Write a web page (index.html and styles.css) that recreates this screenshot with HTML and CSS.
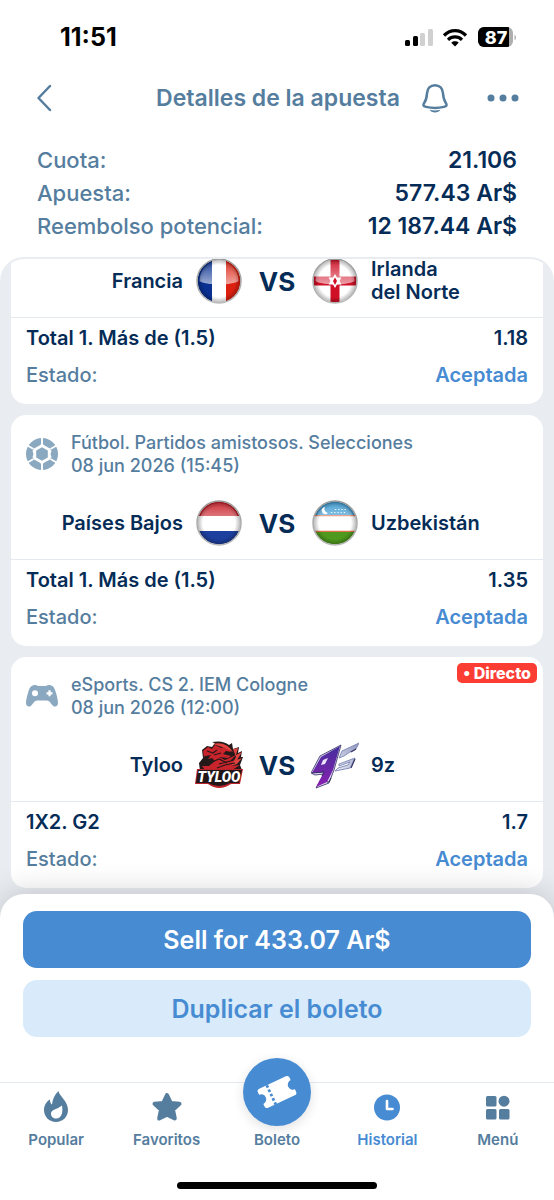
FILE: index.html
```html
<!DOCTYPE html>
<html lang="es">
<head>
<meta charset="utf-8">
<meta name="viewport" content="width=device-width, initial-scale=1">
<title>Detalles de la apuesta</title>
<link rel="stylesheet" href="styles.css">
</head>
<body>
<svg class="defs" width="0" height="0" aria-hidden="true">
  <defs>
    <clipPath id="disc"><circle cx="24" cy="24" r="21.5"/></clipPath>
    <linearGradient id="gloss" x1="0" y1="0" x2="0" y2="1">
      <stop offset="0" stop-color="#fff" stop-opacity=".1"/>
      <stop offset="1" stop-color="#fff" stop-opacity=".6"/>
    </linearGradient>
    <linearGradient id="rim" x1="0" y1="0" x2="0" y2="1">
      <stop offset="0" stop-color="#9a9a9a"/>
      <stop offset="1" stop-color="#b9b9b9"/>
    </linearGradient>
    <radialGradient id="shade" cx=".5" cy=".5" r=".5">
      <stop offset=".75" stop-color="#000" stop-opacity="0"/>
      <stop offset="1" stop-color="#000" stop-opacity=".28"/>
    </radialGradient>
    <linearGradient id="violet" x1="0" y1="0" x2="0" y2="1">
      <stop offset="0" stop-color="#44309c"/>
      <stop offset="1" stop-color="#8a1fb0"/>
    </linearGradient>
    <linearGradient id="silver" x1="1" y1="0" x2="0" y2="1">
      <stop offset="0" stop-color="#8d96bd"/>
      <stop offset="1" stop-color="#eceef8"/>
    </linearGradient>
    <g id="glass">
      <path d="M4.500 24A19.500 20 0 0 1 43.500 24C38 28.500 10 28.500 4.500 24Z" fill="url(#gloss)"/>
      <circle cx="24" cy="24" r="21.500" fill="url(#shade)"/>
      <circle cx="24" cy="24" r="22" fill="none" stroke="url(#rim)" stroke-width="1.500"/>
    </g>
  </defs>
</svg>

<header class="top">
  <div class="status">
    <span class="clock">11:51</span>
    <svg class="status-icons" width="112" height="24" viewBox="0 0 112 24" role="img" aria-label="Señal, wifi, batería">
      <rect x="1" y="15" width="5" height="6" rx="1.500"/>
      <rect x="9" y="11" width="5" height="10" rx="1.500"/>
      <g fill="#d0d0d0"><rect x="16" y="8" width="5" height="13" rx="1.500"/><rect x="24" y="4" width="5" height="17" rx="1.500"/></g>
      <g fill="none" stroke="#000" stroke-width="3.200"><path d="M40 10.500C46.500 4 55.500 4 62 10.500"/><path d="M44 14.800C48 11 54 11 58 14.800"/></g>
      <path d="M51 21.500L47.300 17.700C49.300 15.800 52.700 15.800 54.700 17.700Z"/>
      <clipPath id="cell"><rect x="74" y="2" width="35" height="20" rx="6"/></clipPath>
      <g clip-path="url(#cell)"><rect x="74" y="2" width="35" height="20" fill="#aeaeae"/><rect x="74" y="2" width="31" height="20"/></g>
      <path d="M110.500 9.500V15.500Q112 14.500 112 12.500Q112 10.500 110.500 9.500Z" fill="#aeaeae"/>
      <text class="battery" x="92" y="18.500" text-anchor="middle">87</text>
    </svg>
  </div>
  <div class="bar">
    <button class="icon-btn" type="button" aria-label="Atrás">
      <svg width="16" height="28" viewBox="0 0 16 28"><path d="M14 2L2.500 14L14 26" fill="none" stroke="currentColor" stroke-width="2.500" stroke-linecap="round" stroke-linejoin="round"/></svg>
    </button>
    <h1 class="title">Detalles de la apuesta</h1>
    <div class="tools">
      <button class="icon-btn" type="button" aria-label="Notificaciones">
        <svg width="28" height="32" viewBox="0 0 28 32"><path d="M14 3.200C9.300 3.200 6.300 6.600 6 11.300C5.700 16.500 5.300 17.900 3.300 20.700C1.600 23.100 2.200 24.300 5 24.900C10.500 26.200 17.500 26.200 23 24.900C25.800 24.300 26.400 23.100 24.700 20.700C22.700 17.900 22.300 16.500 22 11.300C21.700 6.600 18.700 3.200 14 3.200Z" fill="none" stroke="currentColor" stroke-width="2.500"/><path d="M8.800 27.800C12 28.700 16 28.700 19.200 27.800C18 31.300 10 31.300 8.800 27.800Z" fill="currentColor"/></svg>
      </button>
      <button class="icon-btn" type="button" aria-label="Más opciones">
        <svg width="34" height="12" viewBox="0 0 34 12" fill="currentColor"><circle cx="5" cy="6" r="3.500"/><circle cx="17" cy="6" r="3.500"/><circle cx="29" cy="6" r="3.500"/></svg>
      </button>
    </div>
  </div>
  <dl class="summary">
    <div class="sum-row"><dt>Cuota:</dt><dd>21.106</dd></div>
    <div class="sum-row"><dt>Apuesta:</dt><dd>577.43 Ar$</dd></div>
    <div class="sum-row"><dt>Reembolso potencial:</dt><dd>12 187.44 Ar$</dd></div>
  </dl>
</header>

<main class="list">
  <article class="card">
    <div class="match">
      <span class="team home">Francia</span>
      <svg class="crest" viewBox="0 0 48 48" role="img" aria-label="Francia"><g clip-path="url(#disc)"><path fill="#fff" d="M0 0H48V48H0Z"/><path fill="#0a3192" d="M0 0H17V48H0Z"/><path fill="#dc2010" d="M31 0H48V48H31Z"/></g><use href="#glass"/></svg>
      <span class="vs">VS</span>
      <svg class="crest" viewBox="0 0 48 48" role="img" aria-label="Irlanda del Norte"><g clip-path="url(#disc)"><path fill="#fff" d="M0 0H48V48H0Z"/><path fill="#cf1026" d="M0 19.500H48V28.500H0ZM19.500 0H28.500V48H19.500Z"/></g><use href="#glass"/><path fill="#fff" d="M24 17L26 20.500H30.500L28.500 24L30.500 27.500H26L24 31L22 27.500H17.500L19.500 24L17.500 20.500H22Z"/><path fill="#cf1026" d="M24 20.500L26 24L24 28L22 24Z"/></svg>
      <span class="team away">Irlanda<br>del Norte</span>
    </div>
    <dl class="odds">
      <div class="odd-row pick"><dt>Total 1. Más de (1.5)</dt><dd>1.18</dd></div>
      <div class="odd-row"><dt>Estado:</dt><dd class="accepted">Aceptada</dd></div>
    </dl>
  </article>

  <article class="card">
    <div class="event">
      <svg class="sport" viewBox="0 0 32 32" aria-hidden="true"><circle cx="16" cy="16" r="16" fill="currentColor"/><path fill="#fff" d="M16 5.500L18.500 7.500L24 10.500L25.500 13L24.500 16L25.500 19L24 21.500L18.500 24.500L16 26.500L13.500 24.500L8 21.500L6.500 19L7.500 16L6.500 13L8 10.500L13.500 7.500Z"/><path fill="currentColor" d="M16 9.300L21.800 12.600V19.400L16 22.700L10.200 19.400V12.600Z"/><path fill="none" stroke="#fff" stroke-width="1.900" d="M16 0V8M16 24V32M24.500 11L30.500 7.500M24.500 21L30.500 24.500M7.500 21L1.500 24.500M7.500 11L1.500 7.500"/></svg>
      <p class="event-text">Fútbol. Partidos amistosos. Selecciones<br><time datetime="2026-06-08T15:45">08 jun 2026 (15:45)</time></p>
    </div>
    <div class="match">
      <span class="team home">Países Bajos</span>
      <svg class="crest" viewBox="0 0 48 48" role="img" aria-label="Países Bajos"><g clip-path="url(#disc)"><path fill="#fff" d="M0 0H48V48H0Z"/><path fill="#c8202a" d="M0 0H48V17H0Z"/><path fill="#1d3f9e" d="M0 32H48V48H0Z"/></g><use href="#glass"/></svg>
      <span class="vs">VS</span>
      <svg class="crest" viewBox="0 0 48 48" role="img" aria-label="Uzbekistán"><g clip-path="url(#disc)"><path fill="#fff" d="M0 0H48V48H0Z"/><path fill="#3d9bd3" d="M0 0H48V16.500H0Z"/><path fill="#4f9a1e" d="M0 32.500H48V48H0Z"/><path fill="#e0704a" d="M0 16H48V17.200H0ZM0 31.800H48V33H0Z"/></g><use href="#glass"/><path fill="#fff" d="M14 8A3.600 3.600 0 1 0 17 14A4 4 0 0 1 14 8Z"/><path d="M20 13.500H35M24 10.500H35" stroke="#fff" stroke-width="1.200" stroke-dasharray="1.200 2"/></svg>
      <span class="team away">Uzbekistán</span>
    </div>
    <dl class="odds">
      <div class="odd-row pick"><dt>Total 1. Más de (1.5)</dt><dd>1.35</dd></div>
      <div class="odd-row"><dt>Estado:</dt><dd class="accepted">Aceptada</dd></div>
    </dl>
  </article>

  <article class="card">
    <span class="live">• Directo</span>
    <div class="event">
      <svg class="sport" viewBox="0 0 32 32" aria-hidden="true"><path fill="currentColor" d="M8.500 5C10.500 4.500 11.500 6 13 6H19C20.500 6 21.500 4.500 23.500 5C27 5.300 28.500 8 29.700 12C31 16 32 20.500 32 23C31.800 26.500 29 27.500 27 25.700C24.500 23.500 23.500 20.500 21 20.500H11C8.500 20.500 7.500 23.500 5 25.700C3 27.500 .2 26.500 0 23C0 20.500 1 16 2.300 12C3.500 8 5 5.300 8.500 5Z"/><circle cx="9" cy="13.300" r="3" fill="#fff"/><path d="M23.500 10.300V16.300M20.500 13.300H26.500" stroke="#fff" stroke-width="2.200"/></svg>
      <p class="event-text">eSports. CS 2. IEM Cologne<br><time datetime="2026-06-08T12:00">08 jun 2026 (12:00)</time></p>
    </div>
    <div class="match">
      <span class="team home">Tyloo</span>
      <svg class="crest" viewBox="0 0 48 48" role="img" aria-label="Tyloo">
        <path fill="#25191a" d="M5 30L4 22L8 17L7 9L12 5L17 6L20 2L26 5L17 1Q28 -1 34 4L37 2L38 8L44 6L43 12L47 10L46 16L48 16L45 24L47 29L42 36Z"/>
        <path fill="#c9242b" d="M9 16L8 10L13 6L17 8L20 4L26 7L32 5L36 11L31 10L28 13L36 15L33 17L24 16L30 19L41 14L34 21L44 18L36 25L45 24L37 29L10 29L7 25L14 25L20 20L17 17L13 18L16 14L10 15Z"/>
        <path fill="#e0433f" d="M18 3Q31 0 38 11L30 7ZM38 8L43 7L41 14L47 11L42 19L47 17L42 23L36 25L41 16Z"/>
        <path fill="none" stroke="#25191a" stroke-width="1.200" d="M12 10L18 12L22 9M19 14L26 12M7 21L15 22L24 18L32 22M24 23L35 20M22 27L30 24L40 22"/>
        <path fill="#b9232a" d="M2 28H48L45 43H36Q24 51 13 43H0Z"/>
        <path fill="#211719" d="M3 29H47L44 42H35Q24 48 13 42H1Z"/>
        <text class="tyloo-word" x="24" y="41" text-anchor="middle">TYLOO</text>
      </svg>
      <span class="vs">VS</span>
      <svg class="crest" viewBox="0 0 48 48" role="img" aria-label="9z">
        <path d="M5 47L13 33L4 34L0 32L9 15L30 4L23 29L18 42Z" fill="#dcd6f0" stroke="#2c2860" stroke-width=".8"/>
        <path fill="url(#violet)" d="M29 5L22 29L16 41L5 46L13 31L1 32L10 16Z"/>
        <path fill="#ece4fa" d="M17 17L14 23L10 24L12 19Z"/>
        <path d="M1 32L13 31L11 35M16 41L18 41L20 37" fill="none" stroke="#2c2860"/>
        <path d="M31 10L48 2L45 8L39 11L33 15L28 17ZM28 23L44 17L39 27L24 30L27 27L37 24L39 21L28 25Z" fill="url(#silver)" stroke="#7c84b4" stroke-width=".9"/>
        <path d="M45 8L40 11M44 18L40 27" stroke="#343064" stroke-width="1.200"/>
      </svg>
      <span class="team away">9z</span>
    </div>
    <dl class="odds">
      <div class="odd-row pick"><dt>1X2. G2</dt><dd>1.7</dd></div>
      <div class="odd-row"><dt>Estado:</dt><dd class="accepted">Aceptada</dd></div>
    </dl>
  </article>
</main>

<section class="sheet">
  <button class="action primary" type="button">Sell for 433.07 Ar$</button>
  <button class="action secondary" type="button">Duplicar el boleto</button>
</section>

<nav class="tabs">
  <a class="tab" href="#popular">
    <svg class="tab-icon" viewBox="0 0 32 32" aria-hidden="true"><path fill="currentColor" d="M18.500 0C19 5 28 10 28 19C28 26 22.500 31 16 31C9.500 31 4 26 4 19C4 14.500 6.500 10.500 10 8.500C10 11 10.500 12.500 12 13.500C12.500 8.500 14.500 3.500 18.500 0Z"/><path fill="#fff" d="M22 14.500C23 20 22.500 27.500 16 27.500C12.500 27.500 11 25 11 22.500C11 18.500 17 18.500 22 14.500Z"/></svg>
    Popular
  </a>
  <a class="tab" href="#favoritos">
    <svg class="tab-icon" viewBox="0 0 32 32" aria-hidden="true"><path fill="currentColor" stroke="currentColor" stroke-width="4" stroke-linejoin="round" d="M16 4L19.700 11.900L28.500 12.800L22 18.700L23.800 27.500L16 23.600L8.200 27.500L10 18.700L3.500 12.800L12.300 11.900Z"/></svg>
    Favoritos
  </a>
  <a class="tab" href="#boleto">
    <span class="ticket"><svg width="44" height="44" viewBox="0 0 48 48" aria-hidden="true"><g transform="rotate(-25 24 24)"><path fill="#fff" d="M8 12.500H40Q43 12.500 43 15.500V18.500A5.500 5.500 0 0 0 43 29.500V32.500Q43 35.500 40 35.500H8Q5 35.500 5 32.500V29.500A5.500 5.500 0 0 0 5 18.500V15.500Q5 12.500 8 12.500Z"/><path d="M17 12.500V36" stroke="#478bd2" stroke-width="3" stroke-dasharray="3 2.200"/></g></svg></span>
    Boleto
  </a>
  <a class="tab active" href="#historial" aria-current="page">
    <svg class="tab-icon" viewBox="0 0 32 32" aria-hidden="true"><circle cx="16" cy="16.500" r="13" fill="currentColor"/><path d="M16 10V18H21.500" fill="none" stroke="#fff" stroke-width="2.600" stroke-linecap="round" stroke-linejoin="round"/></svg>
    Historial
  </a>
  <a class="tab" href="#menu">
    <svg class="tab-icon" viewBox="0 0 32 32" aria-hidden="true" fill="currentColor"><rect x="4" y="5" width="10.500" height="10.500" rx="1.500"/><circle cx="22" cy="10.200" r="5.500"/><rect x="4" y="18" width="10.500" height="10.500" rx="1.500"/><rect x="17" y="18" width="10.500" height="10.500" rx="1.500"/></svg>
    Menú
  </a>
</nav>
<div class="home-indicator"></div>
</body>
</html>
```
FILE: styles.css
```css
:root {
  --slate: #557d9e;
  --navy: #052c57;
  --blue: #478bd2;
  --line: #e4e9f0;
  --ground: #e9edf2;
}

* {
  box-sizing: border-box;
}

body {
  display: flex;
  flex-direction: column;
  height: 100vh;
  margin: 0;
  background: #fff;
  color: var(--slate);
  font-family: Inter, "Liberation Sans", sans-serif;
  font-size: 18px;
}

svg {
  display: block;
}

button {
  border: 0;
  padding: 0;
  background: none;
  color: inherit;
  font: inherit;
  cursor: pointer;
}

dl,
dd,
p,
h1 {
  margin: 0;
}

.defs {
  position: absolute;
}

.status {
  display: flex;
  align-items: center;
  justify-content: space-between;
  height: 74px;
  padding: 0 38px 0 60px;
  color: #000;
}

.clock {
  font-size: 25px;
  font-weight: 700;
}

.battery {
  fill: #fff;
  font-size: 18px;
  font-weight: 800;
}

.bar {
  display: grid;
  grid-template-columns: 1fr auto 1fr;
  align-items: center;
  height: 48px;
  padding: 0 34px 0 36px;
}

.icon-btn {
  justify-self: start;
}

.title {
  font-size: 23px;
  font-weight: 600;
}

.tools {
  display: flex;
  align-items: center;
  justify-content: space-between;
  padding-left: 21px;
}

.summary {
  padding: 22px 37px 14px;
}

.sum-row {
  display: flex;
  justify-content: space-between;
  font-size: 22px;
  font-weight: 500;
  line-height: 33px;
}

.sum-row dd {
  color: var(--navy);
  font-size: 23px;
  font-weight: 600;
}

.list {
  display: flex;
  flex: 1 1 0;
  flex-direction: column;
  gap: 11px;
  justify-content: flex-end;
  min-height: 0;
  overflow: hidden;
  padding: 0 9px 30px;
  border: 2px solid var(--ground);
  border-bottom: 0;
  border-radius: 24px 24px 0 0;
  background: var(--ground);
}

.card {
  position: relative;
  flex: none;
  border-radius: 15px;
  background: #fff;
}

.event {
  display: flex;
  gap: 13px;
  align-items: center;
  padding: 16px 15px 10px;
}

.sport {
  flex: none;
  width: 32px;
  height: 32px;
  color: #8aa8c0;
}

.event-text {
  font-size: 18px;
  font-weight: 500;
  line-height: 23px;
}

.match {
  display: grid;
  grid-template-columns: 1fr 48px 68px 48px 1fr;
  align-items: center;
  height: 72px;
  color: var(--navy);
}

.team {
  padding: 0 12px;
  font-size: 20px;
  font-weight: 600;
  line-height: 23px;
}

.home {
  text-align: right;
}

.crest {
  width: 48px;
  height: 48px;
}

.vs {
  font-size: 26px;
  font-weight: 700;
  text-align: center;
}

.tyloo-word {
  fill: #fff;
  font-family: Roboto, sans-serif;
  font-size: 14px;
  font-style: italic;
  font-weight: 900;
}

.odds {
  padding: 2px 15px 10px;
  border-top: 1px solid var(--line);
}

.odd-row {
  display: flex;
  justify-content: space-between;
  font-size: 20px;
  font-weight: 500;
  line-height: 37px;
}

.pick {
  color: var(--navy);
  font-weight: 600;
}

.accepted {
  color: var(--blue);
  font-weight: 600;
}

.live {
  position: absolute;
  top: 6px;
  right: 6px;
  padding: 0 6px;
  border-radius: 5px;
  background: #fc3d34;
  color: #fff;
  font-size: 16px;
  font-weight: 800;
  line-height: 20px;
}

.sheet {
  position: relative;
  display: grid;
  gap: 12px;
  margin-top: -24px;
  padding: 17px 23px 45px;
  border-radius: 24px 24px 0 0;
  background: #fff;
  box-shadow: 0 0 32px rgba(0, 0, 0, .2);
  clip-path: inset(-40px 0 0 0);
}

.action {
  height: 57px;
  border-radius: 14px;
  font-size: 25px;
  font-weight: 600;
}

.primary {
  background: var(--blue);
  color: #fff;
}

.secondary {
  background: #d9ebfa;
  color: var(--blue);
}

.tabs {
  position: relative;
  display: grid;
  grid-template-columns: repeat(5, 1fr);
  padding: 7px 1px 0;
  border-top: 1px solid var(--line);
  background: #fff;
}

.tab {
  position: relative;
  display: flex;
  flex-direction: column;
  align-items: center;
  justify-content: flex-end;
  height: 59px;
  color: var(--slate);
  font-size: 15px;
  font-weight: 600;
  line-height: 18px;
  text-decoration: none;
}

.tab-icon {
  width: 32px;
  height: 32px;
  margin-bottom: 8px;
}

.active {
  color: var(--blue);
}

.ticket {
  position: absolute;
  top: -32px;
  display: grid;
  place-items: center;
  width: 68px;
  height: 68px;
  border-radius: 50%;
  background: var(--blue);
  box-shadow: 0 3px 12px rgba(0, 0, 0, .12);
}

.home-indicator {
  flex: none;
  width: 36%;
  height: 7px;
  margin: 33px auto 11px;
  border-radius: 4px;
  background: #000;
}
```
